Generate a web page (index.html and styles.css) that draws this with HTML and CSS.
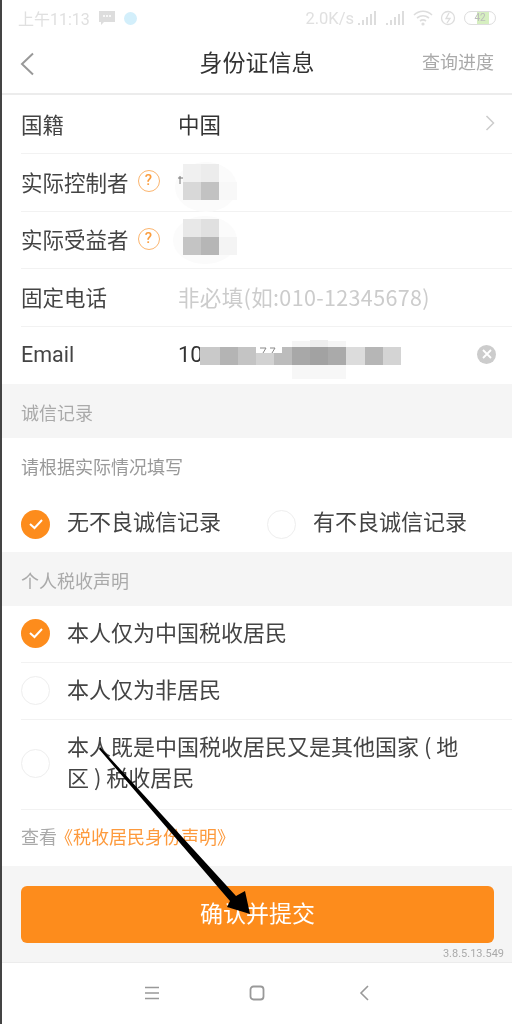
FILE: index.html
```html
<!DOCTYPE html>
<html lang="zh-CN">
<head>
    <meta charset="UTF-8">
    <meta name="viewport" content="width=device-width, initial-scale=1.0">
    <title>身份证信息</title>
    <link rel="stylesheet" href="styles.css">
</head>
<body>
<div class="page">

    <!-- 状态栏 -->
    <div class="status-bar">
        <span class="status-time">上午11:13</span>
        <svg class="status-msg" width="16" height="14" viewBox="0 0 16 14"><path d="M0 0H16V11H5L2 14V11H0Z" fill="#ddd"/><path d="M4 5H6M7 5H9M10 5H12" stroke="#fff" stroke-width="1.6"/></svg>
        <span class="status-dot"></span>
        <span class="status-space"></span>
        <span class="status-speed">2.0K/s</span>
        <svg width="20" height="16" viewBox="0 0 20 16"><path d="M1 15V13M5 15V10M9 15V7M13 15V4M17 15V1" stroke="#ddd" stroke-width="2"/></svg>
        <svg class="status-signal" width="20" height="16" viewBox="0 0 20 16"><path d="M2 15V13M6 15V10M10 15V7M14 15V4M18 15V1" stroke="#ddd" stroke-width="2"/></svg>
        <svg class="status-wifi" width="20" height="16" viewBox="0 0 20 16" fill="none" stroke="#ddd" stroke-width="1.6"><path d="M1 5C6 0 14 0 19 5M4 8C8 5 12 5 16 8M7 11C9 9.500 11 9.500 13 11"/><circle cx="10" cy="14" r="0.800"/></svg>
        <svg class="status-bolt" width="16" height="16" viewBox="0 0 16 16" fill="none" stroke="#ddd" stroke-width="1.300"><circle cx="8" cy="8" r="6.500"/><path d="M9 3L6 8.500H10L7 13"/></svg>
        <span class="status-battery"><span class="battery-fill"></span><span class="battery-text">42</span></span>
    </div>

    <!-- 标题栏 -->
    <div class="title-bar">
        <svg class="back-icon" width="14" height="24" viewBox="0 0 14 24" fill="none" stroke="#999" stroke-width="2"><path d="M13 1.500L2 12L13 22.500"/></svg>
        <div class="title">身份证信息</div>
        <div class="title-link">查询进度</div>
    </div>

    <!-- 基本信息 -->
    <div class="form-list">
        <div class="form-row form-row-first">
            <div class="form-label">国籍</div>
            <div class="form-value">中国</div>
            <svg class="row-arrow" width="10" height="16" viewBox="0 0 10 16" fill="none" stroke="#ccc" stroke-width="1.500"><path d="M1.500 1L8.500 8L1.500 15"/></svg>
        </div>
        <div class="form-row">
            <div class="form-label">实际控制者<span class="help-icon">?</span></div>
            <div class="form-value"></div>
        </div>
        <div class="form-row">
            <div class="form-label">实际受益者<span class="help-icon">?</span></div>
            <div class="form-value"></div>
        </div>
        <div class="form-row">
            <div class="form-label">固定电话</div>
            <div class="form-value placeholder">非必填(如:010-12345678)</div>
        </div>
        <div class="form-row form-row-last">
            <div class="form-label form-label-latin">Email</div>
            <div class="form-value form-value-latin">10</div>
            <span class="clear-icon">
                <svg width="10" height="10" viewBox="0 0 10 10" stroke="#fff" stroke-width="1.800"><path d="M1 1L9 9M9 1L1 9"/></svg>
            </span>
        </div>
    </div>

    <div class="section-title">诚信记录</div>

    <div class="hint-row">请根据实际情况填写</div>
    <div class="radio-line">
        <div class="radio-item radio-item-first">
            <span class="radio checked"><svg width="16" height="12" viewBox="0 0 16 12" fill="none" stroke="#fff" stroke-width="2"><path d="M2 6L6.500 10L14 2"/></svg></span>
            <span class="radio-text">无不良诚信记录</span>
        </div>
        <div class="radio-item">
            <span class="radio"></span>
            <span class="radio-text">有不良诚信记录</span>
        </div>
    </div>

    <div class="section-title">个人税收声明</div>

    <div class="tax-list">
        <div class="tax-row">
            <span class="radio checked"><svg width="16" height="12" viewBox="0 0 16 12" fill="none" stroke="#fff" stroke-width="2"><path d="M2 6L6.500 10L14 2"/></svg></span>
            <div class="tax-text">本人仅为中国税收居民</div>
        </div>
        <div class="tax-row">
            <span class="radio"></span>
            <div class="tax-text">本人仅为非居民</div>
        </div>
        <div class="tax-row tax-row-tall">
            <span class="radio"></span>
            <div class="tax-text">本人既是中国税收居民又是其他国家&nbsp;(&nbsp;地区&nbsp;)&nbsp;税收居民</div>
        </div>
    </div>

    <div class="statement-row">查看<span class="statement-link">《税收居民身份声明》</span></div>

    <!-- 底部按钮 -->
    <div class="footer">
        <div class="submit-button">确认并提交</div>
        <div class="version">3.8.5.13.549</div>
    </div>

    <!-- 导航栏 -->
    <div class="nav-bar">
        <svg width="14" height="14" viewBox="0 0 14 14" stroke="#999" stroke-width="1.500"><path d="M0 1.500H14M0 7H14M0 12.500H14"/></svg>
        <svg width="16" height="16" viewBox="0 0 16 16" fill="none" stroke="#999" stroke-width="1.800"><rect x="1.500" y="1.500" width="13" height="13" rx="3"/></svg>
        <svg width="10" height="16" viewBox="0 0 10 16" fill="none" stroke="#999" stroke-width="1.600"><path d="M9 1L2 8L9 15"/></svg>
    </div>

    <!-- 打码和箭头，盖在页面上面 -->
    <svg class="overlay" width="512" height="1024" viewBox="0 0 512 1024">
        <ellipse cx="206" cy="187" rx="31" ry="25" fill="#fbfbfb"/>
        <ellipse cx="205" cy="240" rx="32" ry="24" fill="#fbfbfb"/>
        <rect x="183" y="164" width="18" height="18" fill="#f0f0f0"/>
        <rect x="201" y="164" width="18" height="18" fill="#ececec"/>
        <rect x="183" y="182" width="18" height="18" fill="#d8d8d8"/>
        <rect x="201" y="182" width="18" height="18" fill="#c2c2c2"/>
        <rect x="219" y="182" width="18" height="18" fill="#f8f8f8"/>
        <path d="M178 178H183M180 176V184" stroke="#777" stroke-width="1"/>
        <rect x="183" y="219" width="18" height="18" fill="#e8e8e8"/>
        <rect x="201" y="219" width="18" height="18" fill="#e0e0e0"/>
        <rect x="183" y="237" width="18" height="18" fill="#c4c4c4"/>
        <rect x="201" y="237" width="18" height="18" fill="#b6b6b6"/>
        <rect x="219" y="237" width="18" height="18" fill="#f4f4f4"/>
        <rect x="292" y="341" width="54" height="18" fill="#f5f5f5"/>
        <rect x="310" y="340" width="18" height="30" fill="#eeeeee"/>
        <rect x="292" y="365" width="54" height="14" fill="#f7f7f7"/>
        <rect x="200" y="347" width="20" height="18" fill="#c9c9c9"/>
        <rect x="220" y="347" width="18" height="18" fill="#b4b4b4"/>
        <rect x="238" y="347" width="18" height="18" fill="#c4c4c4"/>
        <rect x="256" y="347" width="18" height="18" fill="#d2d2d2"/>
        <rect x="256" y="347" width="26" height="6" fill="#fff"/>
        <path d="M260 348H266L263 353M270 348H275L272 353" fill="none" stroke="#888" stroke-width="1"/>
        <rect x="274" y="353" width="18" height="12" fill="#bcbcbc"/>
        <rect x="282" y="347" width="10" height="6" fill="#bcbcbc"/>
        <rect x="292" y="347" width="18" height="18" fill="#a8a8a8"/>
        <rect x="310" y="347" width="18" height="18" fill="#a2a2a2"/>
        <rect x="328" y="347" width="18" height="18" fill="#aaaaaa"/>
        <rect x="346" y="347" width="19" height="18" fill="#dcdcdc"/>
        <rect x="365" y="347" width="18" height="18" fill="#b6b6b6"/>
        <rect x="383" y="347" width="18" height="18" fill="#d4d4d4"/>
        <path d="M100 747L236 896L245 891L250 914L227 907L230 901L99 749Z" fill="#000"/>
    </svg>
</div>
</body>
</html>
```

FILE: styles.css
```css
* {
    box-sizing: border-box;
}
body {
    margin: 0;
    padding: 0;
    background-color: #fff;
    font-family: "Noto Sans CJK SC", Roboto, sans-serif;
    color: #333;
}
.page {
    position: relative;
    width: 512px;
    height: 1024px;
    overflow: hidden;
    border-left: 2px solid #444;
    background-color: #fff;
    filter: blur(0.5px);
}
.status-bar {
    display: flex;
    align-items: center;
    height: 36px;
    padding: 0 16px 0 16px;
    color: #e0e0e0;
    font-family: Roboto, "Noto Sans CJK SC", sans-serif;
    font-size: 16px;
}
.status-msg {
    margin-left: 9px;
}
.status-dot {
    width: 13px;
    height: 13px;
    margin-left: 9px;
    border-radius: 50%;
    background-color: #d3effb;
}
.status-space {
    flex: 1;
}
.status-speed {
    margin-right: 4px;
    font-size: 16.500px;
}
.status-signal {
    margin-left: 7px;
}
.status-wifi {
    margin-left: 8px;
}
.status-bolt {
    margin-left: 7px;
}
.status-battery {
    position: relative;
    width: 32px;
    height: 14px;
    margin-left: 8px;
    border: 1px solid #ddd;
    border-radius: 7px;
    overflow: hidden;
    text-align: center;
    font-size: 10px;
    line-height: 12px;
}
.battery-fill {
    position: absolute;
    top: 0;
    left: 12px;
    width: 12px;
    height: 12px;
    background-color: #d6efc0;
}
.battery-text {
    position: relative;
    color: #bbb;
}
.title-bar {
    position: relative;
    display: flex;
    align-items: center;
    justify-content: center;
    height: 57px;
    padding-bottom: 7px;
}
.back-icon {
    position: absolute;
    left: 18px;
    top: 16px;
}
.title {
    font-size: 23px;
    color: #333;
}
.title-link {
    position: absolute;
    right: 18px;
    top: 12px;
    font-size: 18px;
    color: #aaa;
}
.form-list {
    border-top: 2px solid #ececec;
    padding-left: 19px;
}
.form-row {
    display: flex;
    align-items: center;
    height: 57.500px;
    padding-bottom: 2px;
    border-bottom: 1px solid #f2f2f2;
}
.form-row-first {
    height: 59px;
}
.form-row-last {
    border-bottom: none;
}
.form-label {
    display: flex;
    align-items: center;
    width: 157px;
    font-size: 21.500px;
    color: #444;
    white-space: nowrap;
}
.form-label-latin {
    font-family: Roboto, sans-serif;
    font-size: 21.500px;
}
.form-value {
    flex: 1;
    font-size: 21.500px;
    color: #333;
}
.form-value-latin {
    font-family: Roboto, sans-serif;
    font-size: 22px;
}
.placeholder {
    color: #ccc;
    letter-spacing: 0.350px;
}
.help-icon {
    flex: none;
    width: 22px;
    height: 22px;
    margin-left: 9px;
    border: 1.500px solid #fbb56f;
    border-radius: 50%;
    color: #fb9c3c;
    font-family: Roboto, sans-serif;
    font-size: 15px;
    font-weight: 500;
    line-height: 19px;
    text-align: center;
}
.row-arrow {
    margin-right: 17px;
}
.clear-icon {
    display: flex;
    align-items: center;
    justify-content: center;
    width: 19px;
    height: 19px;
    margin-right: 16px;
    border-radius: 50%;
    background-color: #ccc;
}
.section-title {
    display: flex;
    align-items: center;
    height: 54px;
    padding: 1px 0 0 19px;
    background-color: #f5f5f5;
    font-size: 18px;
    color: #aaa;
}
.hint-row {
    display: flex;
    align-items: center;
    height: 58px;
    padding: 0 0 2px 19px;
    font-size: 18px;
    color: #999;
}
.radio-line {
    display: flex;
    height: 56px;
    padding-left: 19px;
}
.radio-item {
    display: flex;
    align-items: center;
    gap: 17px;
    font-size: 22px;
    color: #444;
}
.radio-item-first {
    width: 246px;
}
.radio-text {
    margin-bottom: 8px;
}
.radio {
    display: flex;
    flex: none;
    align-items: center;
    justify-content: center;
    width: 29px;
    height: 29px;
    border: 1.500px solid #eee;
    border-radius: 50%;
}
.radio.checked {
    border: none;
    background-color: #fd8c1c;
}
.tax-list {
    padding-left: 19px;
}
.tax-row {
    display: flex;
    align-items: center;
    gap: 17px;
    height: 57px;
    padding-bottom: 2px;
    border-bottom: 1px solid #f2f2f2;
}
.tax-row-tall {
    height: 89.500px;
}
.tax-text {
    flex: 1;
    margin-bottom: 4px;
    padding-right: 34px;
    font-size: 22px;
    line-height: 31px;
    color: #444;
}
.statement-row {
    display: flex;
    align-items: center;
    height: 56.500px;
    padding: 0 0 4px 19px;
    font-size: 18px;
    color: #aaa;
}
.statement-link {
    margin-left: -2px;
    color: #fd9a3d;
}
.footer {
    position: relative;
    height: 97px;
    padding: 20px 18px 0 19px;
    background-color: #f5f5f5;
    border-bottom: 1px solid #ececec;
}
.submit-button {
    height: 57px;
    border-radius: 6px;
    background-color: #fd8c1c;
    color: #fff;
    font-size: 23px;
    line-height: 52px;
    text-align: center;
}
.version {
    position: absolute;
    right: 8px;
    bottom: 2px;
    font-family: Roboto, sans-serif;
    font-size: 11px;
    color: #aaa;
}
.nav-bar {
    display: flex;
    align-items: center;
    height: 60px;
    padding-left: 143px;
    gap: 90px;
}
.nav-bar svg:last-child {
    margin-left: 4px;
}
.overlay {
    position: absolute;
    top: 0;
    left: -2px;
}
```
